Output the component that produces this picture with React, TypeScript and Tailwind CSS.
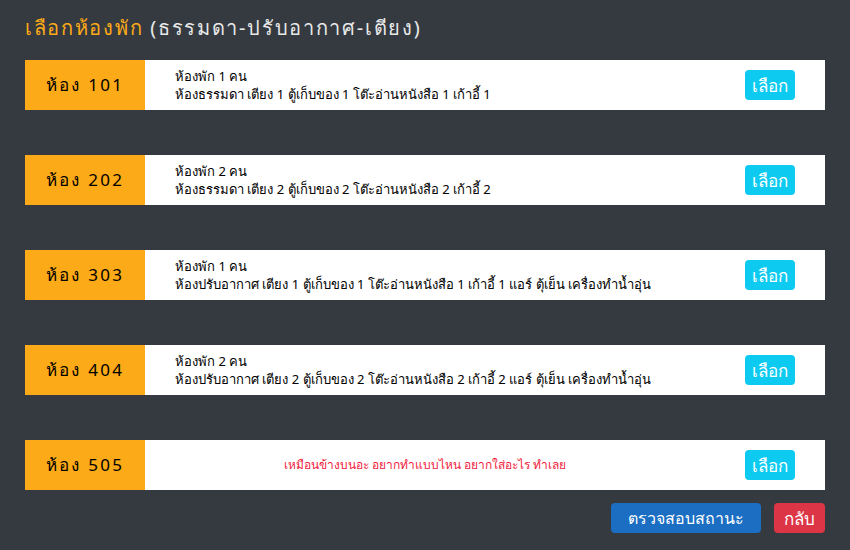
import React from "react";

const rooms = [
  { no: "101", l1: "ห้องพัก 1 คน", l2: "ห้องธรรมดา เตียง 1 ตู้เก็บของ 1 โต๊ะอ่านหนังสือ 1 เก้าอี้ 1" },
  { no: "202", l1: "ห้องพัก 2 คน", l2: "ห้องธรรมดา เตียง 2 ตู้เก็บของ 2 โต๊ะอ่านหนังสือ 2 เก้าอี้ 2" },
  { no: "303", l1: "ห้องพัก 1 คน", l2: "ห้องปรับอากาศ เตียง 1 ตู้เก็บของ 1 โต๊ะอ่านหนังสือ 1 เก้าอี้ 1 แอร์ ตุ้เย็น เครื่องทำน้ำอุ่น" },
  { no: "404", l1: "ห้องพัก 2 คน", l2: "ห้องปรับอากาศ เตียง 2 ตู้เก็บของ 2 โต๊ะอ่านหนังสือ 2 เก้าอี้ 2 แอร์ ตุ้เย็น เครื่องทำน้ำอุ่น" },
];

export default function App() {
  return (
    <div
      className="w-[850px] h-[550px] bg-[#343a40] px-[25px] pt-[14px] overflow-hidden"
      style={{ fontFamily: '"Noto Sans", "DejaVu Sans", sans-serif' }}
    >
      <h1 className="text-[20px] leading-[28px] tracking-[1.7px] h-[46px] font-normal">
        <span className="text-[#fcaa17]">เลือกห้องพัก</span>{" "}
        <span className="text-[#e8e8e8]">(ธรรมดา-ปรับอากาศ-เตียง)</span>
      </h1>
      <div className="flex flex-col gap-[45px]">
        {rooms.map((r) => (
          <div key={r.no} className="flex h-[50px] bg-white">
            <div className="w-[120px] bg-[#fcaa17] flex items-center justify-center text-[17px] tracking-[2.3px] text-black">
              ห้อง {r.no}
            </div>
            <div className="w-[560px] pl-[30px] flex flex-col justify-center text-[13px] leading-[18px] text-black">
              <div>{r.l1}</div>
              <div className="whitespace-nowrap">{r.l2}</div>
            </div>
            <div className="flex-1 flex items-center pl-[40px]">
              <button className="w-[50px] h-[30px] rounded-[4px] bg-[#0dcaf0] text-white text-[17px] leading-none">
                เลือก
              </button>
            </div>
          </div>
        ))}
        <div className="flex h-[50px] bg-white">
          <div className="w-[120px] bg-[#fcaa17] flex items-center justify-center text-[17px] tracking-[2.3px] text-black">
            ห้อง 505
          </div>
          <div className="w-[560px] px-[30px] flex items-center justify-center text-[12px] text-[#ee1c3c]">
            เหมือนข้างบนอะ อยากทำแบบไหน อยากใส่อะไร ทำเลย
          </div>
          <div className="flex-1 flex items-center pl-[40px]">
            <button className="w-[50px] h-[30px] rounded-[4px] bg-[#0dcaf0] text-white text-[17px] leading-none">
              เลือก
            </button>
          </div>
        </div>
      </div>
      <div className="flex justify-end gap-[13px] mt-[13px]">
        <button className="w-[150px] h-[30px] rounded-[4px] bg-[#1b6ec2] text-white text-[16px] leading-none">
          ตรวจสอบสถานะ
        </button>
        <button className="w-[51px] h-[30px] rounded-[4px] bg-[#dc3545] text-white text-[17px] leading-none">
          กลับ
        </button>
      </div>
    </div>
  );
}
